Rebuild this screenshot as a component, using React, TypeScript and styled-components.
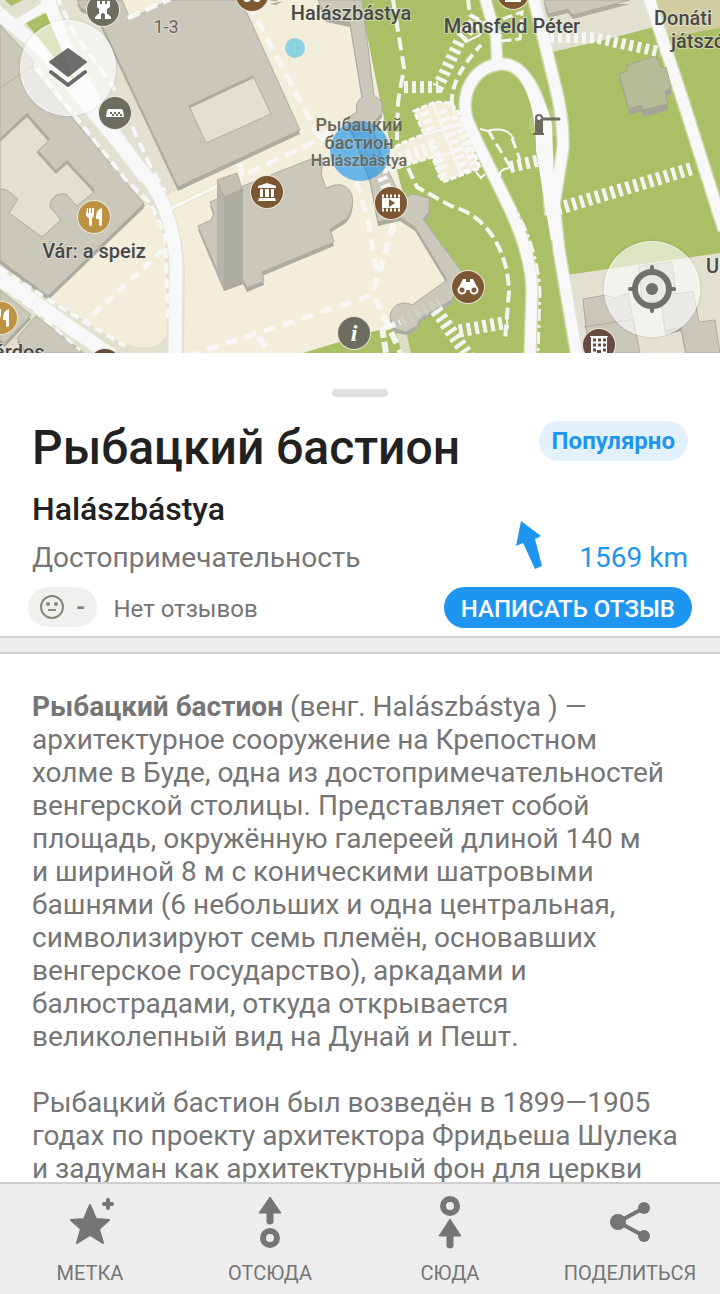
import React from "react";
import styled, { createGlobalStyle } from "styled-components";

const c = {
  ink: "#212121",
  grey: "#757575",
  blue: "#1e96f0",
  line: "#cfcfcf",
  bar: "#ededed",
  building: "#cac8bb",
  shade: "#adaca0",
  street: "#e2e1d1",
  plaza: "#f3eddb",
  green: "#aabf66",
  road: "#f8f8f8",
};

const GlobalStyle = createGlobalStyle`
  * { box-sizing: border-box; }
  body { margin: 0; background: #fff; font-family: Roboto, "Noto Sans", sans-serif; }
  h1, h2, p { margin: 0; }
  button { border: 0; padding: 0; background: none; font: inherit; cursor: pointer; }
`;

const Page = styled.div`
  display: flex;
  flex-direction: column;
  height: 100vh;
  overflow: hidden;
  color: ${c.grey};
`;

const MapArea = styled.section`
  position: relative;
  flex: none;
  aspect-ratio: 720 / 353;
  overflow: hidden;
`;

const MapDrawing = styled.svg`
  display: block;
  width: 100%;
  height: 100%;
`;

const MapButton = styled.button<{ $place: "top" | "bottom" }>`
  position: absolute;
  ${(p) => (p.$place === "top" ? "left: 20px; top: 20px;" : "right: 20px; bottom: 16px;")}
  width: 96px;
  height: 96px;
  border-radius: 50%;
  background: rgba(255, 255, 255, 0.6);
  border: 1px solid rgba(255, 255, 255, 0.5);
  box-shadow: 0 0 3px rgba(0, 0, 0, 0.15);
  display: grid;
  place-items: center;
`;

const Sheet = styled.header`
  flex: none;
  padding: 36px 28px 8px;
`;

const Handle = styled.div`
  width: 56px;
  height: 8px;
  margin: 0 auto;
  border-radius: 4px;
  background: #e0e0e0;
`;

const Row = styled.div<{ $top: number; $align: string }>`
  display: flex;
  justify-content: space-between;
  align-items: ${(p) => p.$align};
  margin-top: ${(p) => p.$top}px;
  padding: 0 4px;
`;

const Title = styled.h1`
  padding-top: 1px;
  font-size: 48px;
  line-height: 56px;
  font-weight: 500;
  color: ${c.ink};
`;

const Badge = styled.span`
  margin-top: 2px;
  padding: 0 13px;
  border-radius: 20px;
  background: #e3f1fd;
  color: ${c.blue};
  font-size: 24px;
  line-height: 40px;
  font-weight: 700;
`;

const LocalName = styled.h2`
  font-size: 32px;
  line-height: 38px;
  font-weight: 500;
  color: ${c.ink};
`;

const Category = styled.p`
  margin-top: 12px;
  font-size: 28px;
  line-height: 36px;
`;

const Distance = styled.div`
  display: flex;
  align-items: flex-end;
  gap: 36px;
  color: ${c.blue};
  font-size: 28px;
  line-height: 36px;
`;

const Compass = styled.svg`
  width: 28px;
  height: 56px;
`;

const Reviews = styled.div`
  display: flex;
  align-items: flex-start;
  margin-top: 11px;
`;

const Rating = styled.span`
  display: flex;
  align-items: center;
  gap: 12px;
  height: 40px;
  padding: 0 12px;
  border-radius: 20px;
  background: #f0f0ee;
  color: #85857a;
  font-size: 24px;
  line-height: 40px;
  font-weight: 700;
`;

const NoReviews = styled.span`
  margin-left: 16px;
  padding-top: 3px;
  font-size: 24px;
  line-height: 38px;
`;

const ReviewButton = styled.button`
  margin-left: auto;
  height: 41px;
  && { padding: 2px 17px 0; }
  border-radius: 21px;
  background: ${c.blue};
  color: #fff;
  font-size: 24px;
  font-weight: 500;
  line-height: 38px;
`;

const Divider = styled.div`
  flex: none;
  height: 18px;
  background: ${c.bar};
  border: solid ${c.line};
  border-width: 2px 0;
`;

const Article = styled.article`
  flex: 1;
  min-height: 0;
  overflow-y: auto;
  scrollbar-width: none;
  padding: 36px 32px 0;
  font-size: 28px;
  line-height: 33px;

  p + p { margin-top: 33px; }
`;

const Toolbar = styled.nav`
  flex: none;
  display: grid;
  grid-template-columns: repeat(4, 1fr);
  height: 112px;
  background: ${c.bar};
  border-top: 2px solid ${c.line};
`;

const Action = styled.button`
  display: flex;
  flex-direction: column;
  align-items: center;
  color: ${c.grey};
  && { padding-top: 12px; }
  font-size: 20px;
  line-height: 24px;

  svg { display: block; margin-bottom: 9px; }
`;

type Line = { d: string; w: number; dash?: string };

const buildings = [
  "M77 0L81 8L97 15L178 187L300 130L241 0H170L130 19L122 0Z",
  "M0 25L34 62L31 68L144 204L48 296L0 260Z",
  "M0 290L31 315L5 343L0 340Z",
  "M17 338L36 316L84 353H26Z",
  "M270 0L276 1L283 -3Z",
  "M318 0L326 18L350 23L362 97A13 13 0 0 0 357 112L345 119L354 135L370 180L378 222L400 217L415 227L447 280L412 305C400 299 390 308 390 317L393 328L406 332L417 326L420 318L452 300L462 272L423 219L429 212L429 198L412 194L402 200L383 160L372 125L382 113L382 102L374 95L362 0Z",
  "M224 197L217 199L210 202L214 213L211 220L198 226L224 287L243 280L247 288L264 281L262 272L334 242L330 229L346 219C356 207 355 188 341 185C336 184 331 186 326 188L321 174L323 158L311 159L243 186Z",
  "M544 0L548 14L568 9L573 15L630 0Z",
  "M583 299L606 295L614 298L628 293L640 353H589Z",
  "M639 266L672 262L676 294L693 291L699 322L715 320L720 353H686L681 327L665 331L661 300L642 303Z",
];

const roads: Line[] = [
  { d: "M-5 10L45 52L98 118L146 176C165 198 176 235 176 270L175 353", w: 13 },
  { d: "M46 -5L65 48L105 122L146 178", w: 14 },
  { d: "M15 25L53 1", w: 8 },
  { d: "M-5 274L68 326L112 356", w: 14 },
  { d: "M170 209L217 186", w: 3 },
  { d: "M533 -5L555 85Q564 120 563 148L554 205L559 250L577 356", w: 11 },
  { d: "M484 -5L496 36L497 60", w: 10 },
  { d: "M551 215L545 135C541 92 522 62 500 64C474 67 460 92 467 119C475 140 492 171 509 207Q533 258 532 295L530 356", w: 11 },
];

const sideRoads: Line[] = [{ d: "M648 -5L684 104L724 230", w: 11 }];

const footways: Line[] = [
  { d: "M56 -5L75 34L112 85L133 128L152 170L165 191", w: 4, dash: "11 6" },
  { d: "M37 68L78 120L126 180L151 204L165 235L168 320", w: 4, dash: "10 5" },
  { d: "M0 268L52 302L90 325L125 346", w: 4, dash: "9 5" },
  { d: "M0 286L35 311L80 350", w: 3, dash: "9 5" },
  { d: "M128 18L170 -1", w: 5, dash: "13 6" },
  { d: "M163 250L84 323", w: 5, dash: "10 7" },
  { d: "M248 3L320 139L242 176L240 164", w: 5, dash: "13 7" },
  { d: "M320 139L352 119", w: 8, dash: "14 5" },
  { d: "M356 181L368 220L377 276L373 295L240 339L185 357", w: 5, dash: "12 8" },
  { d: "M394 224L377 280M375 298L402 355M258 337L270 353", w: 6, dash: "12 7" },
  { d: "M393 0L404 68L398 102L397 140", w: 4, dash: "13 6" },
  { d: "M404 87L438 87L460 40L478 18", w: 12, dash: "4 4" },
  { d: "M452 104Q450 78 481 45M468 0L470 15L490 26", w: 4, dash: "10 5" },
  { d: "M408 168L417 187L451 206C489 216 508 253 509 292L505 340", w: 4, dash: "12 5" },
  { d: "M498 180L519 216Q538 252 540 293L538 353", w: 3, dash: "12 4 3 4" },
  { d: "M488 130L511 168M512 138L520 160", w: 3, dash: "11 5" },
  { d: "M550 37L596 38L661 52", w: 11, dash: "4 4" },
  { d: "M557 209L694 168", w: 13, dash: "4 4" },
  { d: "M510 167L541 160", w: 12, dash: "4 4" },
  { d: "M436 310L469 357M459 331L508 322", w: 13, dash: "4 4" },
  { d: "M503 19L522 12L520 39L501 41", w: 3, dash: "10 4" },
  { d: "M382 327L386 353M385 328L400 322", w: 6, dash: "11 4" },
];

const plazaSteps = "M414 111L435 102L451 103L459 113L480 168L443 182L432 157L385 172L387 152L402 143L424 134Z";

const cutlery = "M-7-9H-6V-4H-5V-9H-3V-4H-2V-9H0V-3Q0 0-2 1V8Q-2 9-3 9T-5 8V1Q-8 0-8-3ZM2 0Q2-7 8-9V8Q7 10 5 8V2H2Z";

const StreetMap = () => (
  <MapDrawing viewBox="0 0 720 353" preserveAspectRatio="xMidYMid slice" role="img" aria-label="Карта">
    <rect width="720" height="353" fill={c.street} />
    <path fill={c.plaza} d="M122 0H370L460 280L400 353H184L185 270Q182 220 165 196L178 190L205 178L128 19ZM146 204L50 299L102 331C132 353 164 353 167 331L165 240L152 206Z" />
    <path fill={c.green} d="M5 0L11 6L27 -2ZM360 0H720V353H303L372 332L430 315L460 275L423 222L402 190L382 110Z" />
    <path fill={c.street} d="M533 0L552 52L600 41L658 26L647 0ZM566 275L720 253V353H577Z" />
    <path fill="#d2cda1" d="M657 0H720V28L668 37Z" />

    {[...roads, ...sideRoads].map((r) => (
      <path key={r.d} d={r.d} fill="none" stroke="#e5e7d4" strokeWidth={r.w + 3} opacity=".6" />
    ))}
    {[...roads, ...sideRoads].map((r) => (
      <path key={r.d} d={r.d} fill="none" stroke={c.road} strokeWidth={r.w} />
    ))}
    <path fill={c.road} d="M516 66Q541 82 552 124L554 190L558 200L561 240L551 240L545 205L536 150Q536 100 516 74Z" />
    <path fill={c.green} d="M26 23L46 13L76 84Z" />

    <g transform="translate(0 4)" fill={c.shade}>
      {buildings.map((d) => <path key={d} d={d} />)}
    </g>
    <g fill={c.building} stroke={c.shade} strokeWidth="1">
      {buildings.map((d) => <path key={d} d={d} />)}
    </g>
    <path fill={c.street} stroke={c.shade} d="M189 106L253 76L271 114L206 143ZM0 141L27 116L49 140L37 152L56 173L67 162L94 192L77 206L66 194C57 193 50 197 50 207L61 220L42 237L9 213L18 199L7 190L0 189Z" />
    <path fill="none" stroke={c.shade} strokeWidth="3" d="M189 107L253 77M0 140L27 115L49 140M38 152L56 172L67 162L94 191M144 205L48 298" />
    <path fill="none" stroke={c.shade} d="M0 88L31 67M584 327L636 319" />
    <path fill="#b6b4a9" d="M217 180L224 197V291L217 275Z" />
    <path fill={c.shade} d="M224 197L243 188V284L224 291Z" />
    <path fill="#c4c1b3" stroke={c.shade} d="M217 180L237 173L242 189L224 197Z" />
    <path fill="#a5a49a" d="M619 78L630 115L641 111L643 117L668 110L666 97L671 93V87Z" />
    <path fill="#b7bc98" stroke="#a2a68a" d="M627 65L656 56L661 68L666 67L671 88L665 92L668 104L643 110L641 105L629 109L619 74L627 71Z" />
    <path fill="none" stroke="#d8d6ca" opacity=".5" strokeWidth="12" strokeDasharray="4 4" d="M402 322L440 302" />

    <path fill={c.plaza} stroke={c.road} strokeWidth="3" strokeDasharray="6 2" d={plazaSteps} />
    <path fill="none" stroke={c.road} strokeWidth="12" strokeDasharray="4 4" d="M392 161L436 146" />
    <path fill="none" stroke={c.road} strokeWidth="9" strokeDasharray="4 4" d="M424 112L432 134M437 158L443 178M442 110L466 172" />
    <path fill="none" stroke={c.road} strokeWidth="7" strokeDasharray="4 3" d="M430 140L446 172M454 116L474 165" />
    <path fill="none" stroke={c.road} strokeWidth="2" d="M433 104L461 174M426 134L464 124M436 157L475 146M461 28L477 25L480 35L466 42L459 34ZM480 129L488 131Q507 126 514 139M509 165L513 172M500 176Q499 169 509 168M476 172L481 178L485 174" />

    {footways.map((f) => (
      <path key={f.d} d={f.d} fill="none" stroke={c.road} strokeWidth={f.w} strokeDasharray={f.dash} opacity=".95" />
    ))}
    <path fill="none" stroke={c.road} strokeWidth="10" strokeDasharray="4 4" d="M382 177L392 202" />
    <path fill={c.street} opacity=".9" d="M396 333L407 335L411 353H402Z" />

    <circle cx="295" cy="48" r="10" fill="#8cd3df" />
    <circle cx="360" cy="151" r="30" fill="#1e96f0" opacity=".65" />
    <circle cx="545" cy="124" r="16" fill="#fff" opacity=".15" />
    <g fill="#6c6c60" stroke="#6c6c60">
      <path stroke="none" d="M533 135V133H535V120H543V133H544V135Z" />
      <path strokeWidth="3" strokeLinecap="round" d="M540 119H559" />
      <circle cx="539" cy="118" r="3" fill="#f8f8f8" strokeWidth="2" />
    </g>

    <Poi x={103} y={10} color="#6c6c60">
      <path d="M-6-9H-3V-6H-1V-9H2V-6H4V-9H7V-3L4-1V4H5L8 7V9H2V5Q2 3 0 3T-2 5V9H-8V7L-5 4H-4V-1L-6-3Z" />
    </Poi>
    <Poi x={115} y={113} color="#6c6c60">
      <path d="M-6-4H6Q8-4 8-2L9 4H-9L-8-2Q-8-4-6-4Z" />
      <path d="M-5 0H5M-3 2H7" stroke="#6c6c60" strokeWidth="2" strokeDasharray="2 2" />
    </Poi>
    <Poi x={94} y={217} color="#bd9343">
      <path d={cutlery} />
    </Poi>
    <Poi x={1} y={318} color="#bd9343">
      <path d={cutlery} />
    </Poi>
    <Poi x={267} y={192} color="#7c5732">
      <path d="M0-9L9-6V-4H-9V-6ZM-7-3H-4V5H-7ZM-2-3H2V5H-2ZM4-3H7V5H4ZM-8 6H8L9 9H-9Z" />
    </Poi>
    <Poi x={391} y={203} color="#7c5732">
      <path d="M-9-5H9V5H-9Z" />
      <path stroke="#fff" strokeWidth="3" strokeDasharray="2 2" d="M-9-7H9M-9 7H9" />
      <path fill="#7c5732" d="M-2-4L4 0L-2 4Z" />
    </Poi>
    <Poi x={468} y={287} color="#7c5732">
      <path d="M-5-8H-2V-5H2V-8H5L8-2L10 3H-10L-8-2Z" />
      <circle cx="-6" cy="3" r="3.5" fill="#7c5732" stroke="#fff" strokeWidth="2" />
      <circle cx="6" cy="3" r="3.5" fill="#7c5732" stroke="#fff" strokeWidth="2" />
    </Poi>
    <Poi x={354} y={333} color="#6c6c60">
      <text y="8" textAnchor="middle" fontFamily="Liberation Serif, serif" fontSize="24" fontStyle="italic" fontWeight="700">i</text>
    </Poi>
    <Poi x={599} y={345} color="#654b40">
      <path d="M-9-9H9V-8H8V10H2V5H-2V10H-8V-8H-9Z" />
      <path stroke="#654b40" strokeWidth="3" strokeDasharray="3 2" d="M-6-5H7M-6 0H7M-6 5H-3M4 5H7" />
    </Poi>
    <Poi x={105} y={365} color="#654b40" />
    <Poi x={252} y={-5} color="#7c5732">
      <circle cx="-5" cy="3" r="4" />
      <circle cx="5" cy="3" r="4" />
    </Poi>
    <Poi x={513} y={-7} color="#7c5732">
      <path d="M-8 6H8V9H-8Z" />
    </Poi>

    <g fontFamily="Roboto, sans-serif" fontSize="20" fontWeight="500" fill="#484848" stroke="#f1efe2" strokeOpacity=".5" strokeWidth="2" paintOrder="stroke" textAnchor="middle">
      <text x="166" y="33" fontSize="18" fontWeight="400" fill="#66665e">1-3</text>
      <text x="351" y="20">Halászbástya</text>
      <text x="512" y="33">Mansfeld Péter</text>
      <text x="654" y="25" textAnchor="start">Donáti</text>
      <text x="671" y="48" textAnchor="start">játszó</text>
      <text x="94" y="258">Vár: a speiz</text>
      <text x="-6" y="359" textAnchor="start">árdos</text>
      <text x="706" y="273" textAnchor="start">Uri</text>
      <g fill="#66665a" strokeOpacity=".2">
        <text x="359" y="131" fontSize="18">Рыбацкий</text>
        <text x="359" y="149" fontSize="18">бастион</text>
        <text x="359" y="166" fontSize="16">Halászbástya</text>
      </g>
    </g>
  </MapDrawing>
);

function Poi({ x, y, color, children }: { x: number; y: number; color: string; children?: React.ReactNode }) {
  return (
    <g transform={`translate(${x} ${y})`} fill="#fff">
      <circle r="17" fill="#e9e5d7" />
      <circle r="16" fill={color} />
      {children}
    </g>
  );
}

const paragraphs = [
  <>
    <b>Рыбацкий бастион</b> (венг. Halászbástya ) — архитектурное сооружение на Крепостном холме&nbsp;в Буде, одна из
    достопримечательностей венгерской столицы. Представляет собой площадь, окружённую галереей длиной 140&nbsp;м
    и&nbsp;шириной 8&nbsp;м с коническими шатровыми башнями (6 небольших и одна центральная, символизируют семь племён,
    основавших венгерское государство), аркадами и балюстрадами, откуда открывается великолепный вид на Дунай и Пешт.
  </>,
  <>
    Рыбацкий бастион был возведён в 1899—1905 годах по проекту архитектора Фридьеша Шулека и&nbsp;задуман как
    архитектурный фон для церкви
  </>,
];

const actions = [
  {
    label: "МЕТКА",
    icon: (
      <>
        <path d="M28 9L34 23L47 24L37 33L41 47L28 39L15 47L19 33L9 24L22 23Z" strokeLinejoin="round" stroke="currentColor" strokeWidth="2" />
        <path d="M46 4V12M42 8H50" stroke="currentColor" strokeWidth="4" strokeLinecap="round" />
      </>
    ),
  },
  {
    label: "ОТСЮДА",
    icon: (
      <>
        <path d="M28 1L39 17H31V26Q31 28 28 28T25 26V17H17Z" stroke="currentColor" strokeWidth="1" strokeLinejoin="round" />
        <circle cx="28" cy="42" r="7" fill="none" stroke="currentColor" strokeWidth="6" />
      </>
    ),
  },
  {
    label: "СЮДА",
    icon: (
      <>
        <circle cx="28" cy="10" r="7" fill="none" stroke="currentColor" strokeWidth="6" />
        <path d="M28 23L39 40H31V50Q31 52 28 52T25 50V40H17Z" stroke="currentColor" strokeWidth="1" strokeLinejoin="round" />
      </>
    ),
  },
  {
    label: "ПОДЕЛИТЬСЯ",
    icon: (
      <>
        <path d="M42 12L16 26L42 40" fill="none" stroke="currentColor" strokeWidth="4" />
        <circle cx="16" cy="26" r="8" />
        <circle cx="42" cy="12" r="6" />
        <circle cx="42" cy="40" r="6" />
      </>
    ),
  },
];

export default function App() {
  return (
    <Page>
      <GlobalStyle />
      <MapArea>
        <StreetMap />
        <MapButton $place="top" aria-label="Слои карты">
          <svg width="40" height="40" viewBox="0 0 40 40" fill="#555" opacity=".85">
            <path d="M20 1L38 14L20 28L2 14Z" stroke="#555" strokeLinejoin="round" strokeWidth="2" />
            <path d="M3 24L20 37L37 24" fill="none" stroke="#555" strokeWidth="4" strokeLinecap="round" strokeLinejoin="round" />
          </svg>
        </MapButton>
        <MapButton $place="bottom" aria-label="Моё местоположение">
          <svg width="48" height="48" viewBox="0 0 48 48" fill="none" stroke="#707070">
            <circle cx="24" cy="24" r="17" strokeWidth="6" />
            <circle cx="24" cy="24" r="6" fill="#707070" stroke="none" />
            <path d="M24 2V7M24 41V46M2 24H7M41 24H46" strokeWidth="4" strokeLinecap="round" />
          </svg>
        </MapButton>
      </MapArea>

      <Sheet>
        <Handle />
        <Row $top={22} $align="flex-start">
          <Title>Рыбацкий бастион</Title>
          <Badge>Популярно</Badge>
        </Row>
        <Row $top={14} $align="flex-end">
          <div>
            <LocalName>Halászbástya</LocalName>
            <Category>Достопримечательность</Category>
          </div>
          <Distance>
            <Compass viewBox="0 0 28 56" fill={c.blue} aria-hidden="true">
              <path d="M6 1L26 16L20 19L27 46L20 49L8 23L1 26Z" />
            </Compass>
            1569 km
          </Distance>
        </Row>
        <Reviews>
          <Rating>
            <svg width="24" height="24" viewBox="0 0 24 24" fill="none" stroke="currentColor" strokeWidth="2" aria-hidden="true">
              <circle cx="12" cy="12" r="11" />
              <circle cx="8" cy="9" r="2" fill="currentColor" stroke="none" />
              <circle cx="16" cy="9" r="2" fill="currentColor" stroke="none" />
              <path d="M8 15H16" />
            </svg>
            -
          </Rating>
          <NoReviews>Нет отзывов</NoReviews>
          <ReviewButton>НАПИСАТЬ ОТЗЫВ</ReviewButton>
        </Reviews>
      </Sheet>

      <Divider />

      <Article>
        {paragraphs.map((p, i) => (
          <p key={i}>{p}</p>
        ))}
      </Article>

      <Toolbar>
        {actions.map((a) => (
          <Action key={a.label}>
            <svg width="56" height="56" viewBox="0 0 56 56" fill="currentColor" aria-hidden="true">
              {a.icon}
            </svg>
            {a.label}
          </Action>
        ))}
      </Toolbar>
    </Page>
  );
}
